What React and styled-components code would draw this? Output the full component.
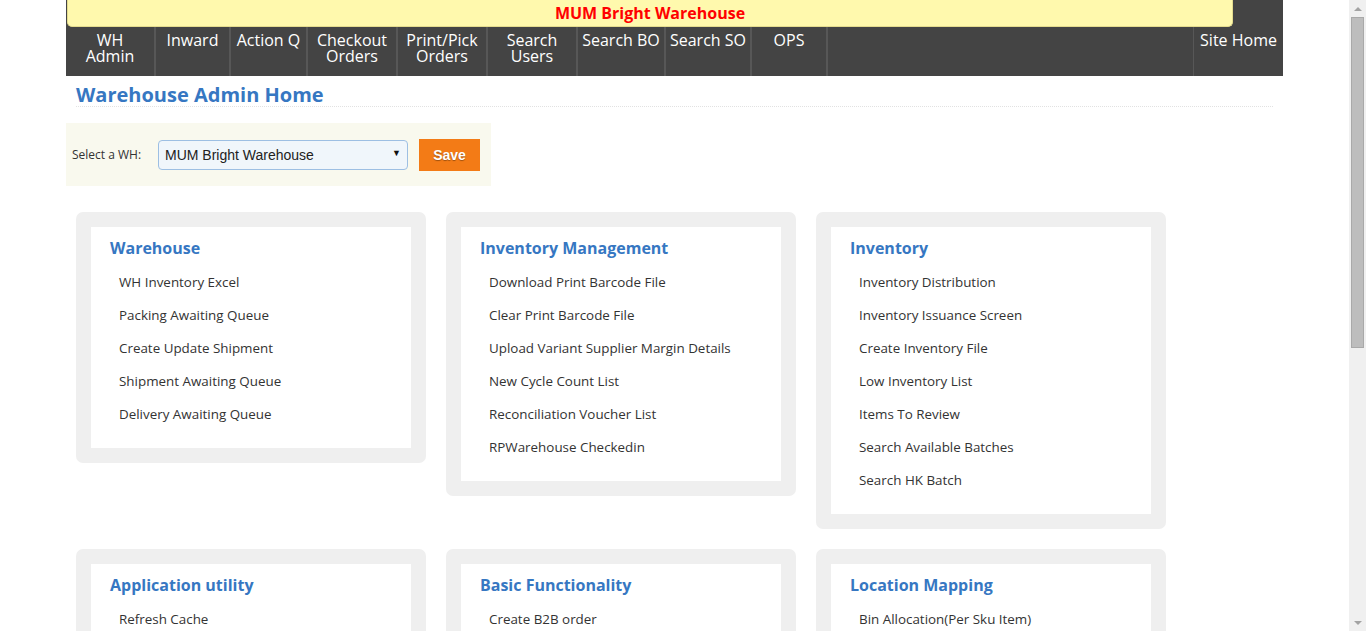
import React from "react";
import styled, { createGlobalStyle } from "styled-components";

const Global = createGlobalStyle`
  body {
    margin: 0;
    padding-right: 17px;
    background: #fff;
    font-family: "Open Sans", "DejaVu Sans", sans-serif;
  }
`;

const ScrollGutter = styled.div`
  position: fixed;
  top: 0;
  right: 0;
  width: 17px;
  height: 100vh;
  background: #f0f0f0;
  display: flex;
  flex-direction: column;
  align-items: center;
`;

const ScrollArrow = styled.div`
  width: 0;
  height: 0;
  margin: ${(p) => (p.$down ? "auto 0 6px" : "7px 0 0")};
  border-left: 4px solid transparent;
  border-right: 4px solid transparent;
  ${(p) =>
    p.$down ? "border-top: 4px solid #a3a3a3;" : "border-bottom: 4px solid #a3a3a3;"}
`;

const ScrollThumb = styled.div`
  width: 13px;
  height: 331px;
  margin-top: 6px;
  box-sizing: border-box;
  background: #bdbdbd;
  border: 1px solid #a9a9a9;
`;

const Wrapper = styled.div`
  width: 1217px;
  min-height: 1138px;
  margin: 0 auto;
`;

const Header = styled.header`
  background: #444444;
  height: 76px;
  display: flex;
  flex-direction: column;
`;

const Banner = styled.div`
  width: 1166px;
  height: 27px;
  margin-left: 1px;
  box-sizing: border-box;
  background: #fff9ad;
  border: 1px solid #e4dc8e;
  border-top: none;
  border-radius: 0 0 5px 5px;
  display: flex;
  align-items: center;
  justify-content: center;
  color: #ff0000;
  font-weight: 700;
  font-size: 16px;
`;

const Nav = styled.nav`
  flex: 1;
  display: flex;
`;

const NavItem = styled.a`
  box-sizing: border-box;
  width: ${(p) => p.$w}px;
  padding-top: 5px;
  color: #fff;
  font-size: 16px;
  line-height: 16px;
  text-align: center;
  border-right: ${(p) => (p.$last ? "none" : "2px solid #575757")};
  border-left: ${(p) => (p.$last ? "1px solid #575757" : "none")};
  cursor: pointer;
`;

const Spacer = styled.div`
  flex: 1;
`;

const Content = styled.main`
  display: flex;
  flex-direction: column;
`;

const Title = styled.h1`
  margin: 8px 10px 0;
  font-size: 20px;
  line-height: 22px;
  font-weight: 700;
  color: #3677c2;
  border-bottom: 1px dotted #e2e2e2;
`;

const SelectBar = styled.form`
  align-self: flex-start;
  margin-top: 16px;
  width: 425px;
  height: 63px;
  box-sizing: border-box;
  background: #f9f9ee;
  display: flex;
  align-items: center;
  padding-left: 6px;
`;

const Label = styled.label`
  font-size: 12px;
  color: #333;
  width: 86px;
`;

const SelectBox = styled.div`
  position: relative;
  width: 250px;
  height: 30px;
  box-sizing: border-box;
  border: 1px solid #9dbfe3;
  border-radius: 4px;
  background: #f0f6fb;
  display: flex;
  align-items: center;
  padding-left: 6px;
  font-family: "Liberation Sans", Arial, sans-serif;
  font-size: 14px;
  color: #222;
`;

const Arrow = styled.span`
  position: absolute;
  right: 6px;
  top: 7px;
  font-size: 9px;
  color: #111;
`;

const SaveButton = styled.button`
  margin-left: 11px;
  width: 61px;
  height: 32px;
  border: none;
  background: #f37b16;
  color: #fff;
  font-family: "Liberation Sans", Arial, sans-serif;
  font-weight: 700;
  font-size: 14px;
  text-shadow: 0 1px 1px rgba(0, 0, 0, 0.35);
  cursor: pointer;
`;

const Grid = styled.div`
  margin: 26px 10px 0;
  display: grid;
  grid-template-columns: repeat(3, 350px);
  gap: 20px;
  align-items: start;
`;

const Card = styled.section`
  background: #efefef;
  border-radius: 7px;
  padding: 15px;
`;

const CardInner = styled.div`
  background: #fff;
  padding: 11px 19px 17px;
`;

const CardTitle = styled.h2`
  margin: 0 0 8px;
  font-size: 16px;
  line-height: 20px;
  font-weight: 700;
  color: #3677c2;
`;

const List = styled.ul`
  list-style: none;
  margin: 0;
  padding: 0 0 0 9px;
`;

const Item = styled.li`
  font-size: 13.4px;
  line-height: 33px;
  color: #333;
  cursor: pointer;
`;

const navItems = [
  ["WH", "Admin", 90],
  ["Inward", null, 75],
  ["Action Q", null, 77],
  ["Checkout", "Orders", 90],
  ["Print/Pick", "Orders", 90],
  ["Search", "Users", 90],
  ["Search BO", null, 88],
  ["Search SO", null, 86],
  ["OPS", null, 76],
];

const cards = [
  {
    title: "Warehouse",
    items: [
      "WH Inventory Excel",
      "Packing Awaiting Queue",
      "Create Update Shipment",
      "Shipment Awaiting Queue",
      "Delivery Awaiting Queue",
    ],
  },
  {
    title: "Inventory Management",
    items: [
      "Download Print Barcode File",
      "Clear Print Barcode File",
      "Upload Variant Supplier Margin Details",
      "New Cycle Count List",
      "Reconciliation Voucher List",
      "RPWarehouse Checkedin",
    ],
  },
  {
    title: "Inventory",
    items: [
      "Inventory Distribution",
      "Inventory Issuance Screen",
      "Create Inventory File",
      "Low Inventory List",
      "Items To Review",
      "Search Available Batches",
      "Search HK Batch",
    ],
  },
  {
    title: "Application utility",
    items: ["Refresh Cache", "Clear Logs", "System Settings"],
  },
  {
    title: "Basic Functionality",
    items: ["Create B2B order", "Search Orders", "Change Password"],
  },
  {
    title: "Location Mapping",
    items: ["Bin Allocation(Per Sku Item)", "Bin Allocation(Bulk)", "Search Bins"],
  },
];

export default function App() {
  return (
    <>
      <Global />
      <Wrapper>
        <Header>
          <Banner>MUM Bright Warehouse</Banner>
          <Nav>
            {navItems.map(([a, b, w]) => (
              <NavItem key={a} $w={w}>
                {a}
                {b && <br />}
                {b}
              </NavItem>
            ))}
            <Spacer />
            <NavItem $w={90} $last>
              Site Home
            </NavItem>
          </Nav>
        </Header>
        <Content>
          <Title>Warehouse Admin Home</Title>
          <SelectBar>
            <Label>Select a WH:</Label>
            <SelectBox>
              MUM Bright Warehouse
              <Arrow>▼</Arrow>
            </SelectBox>
            <SaveButton type="button">Save</SaveButton>
          </SelectBar>
          <Grid>
            {cards.map((c) => (
              <Card key={c.title}>
                <CardInner>
                  <CardTitle>{c.title}</CardTitle>
                  <List>
                    {c.items.map((i) => (
                      <Item key={i}>{i}</Item>
                    ))}
                  </List>
                </CardInner>
              </Card>
            ))}
          </Grid>
        </Content>
      </Wrapper>
      <ScrollGutter aria-hidden="true">
        <ScrollArrow />
        <ScrollThumb />
        <ScrollArrow $down />
      </ScrollGutter>
    </>
  );
}
